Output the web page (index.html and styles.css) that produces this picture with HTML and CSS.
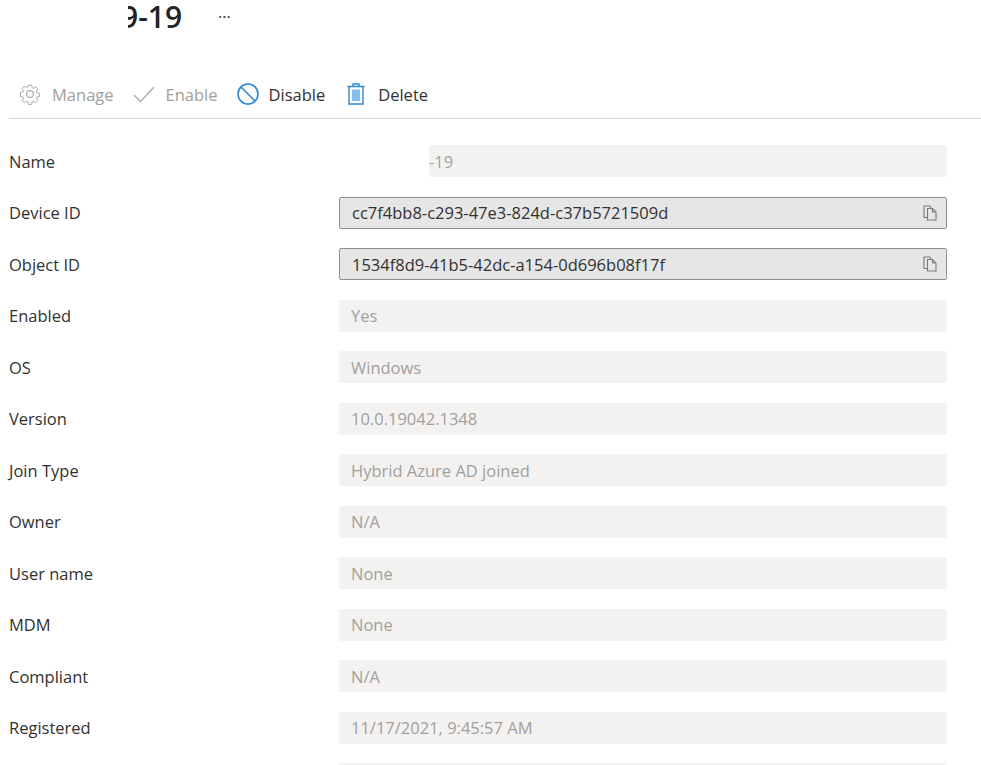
FILE: index.html
```html
<!DOCTYPE html>
<html lang="en">
<head>
    <meta charset="UTF-8">
    <title>Device details</title>
    <link rel="stylesheet" href="styles.css">
</head>
<body>
    <div class="title-bar">
        <h1 class="title"><span>9-19</span></h1>
        <span class="more">&middot;&middot;&middot;</span>
    </div>
    <div class="toolbar">
        <span class="tool off">
            <svg width="22" height="22" viewBox="0 0 22 22" fill="none" stroke="#a8a8a8" stroke-width="1.1">
                <circle cx="11" cy="11" r="3.4"/>
                <path d="M9.2 1.3h3.6l.5 2.7 1.7.7 2.3-1.6 2.5 2.5-1.6 2.3.7 1.7 2.7.5v3.6l-2.7.5-.7 1.7 1.6 2.3-2.5 2.5-2.3-1.6-1.7.7-.5 2.7H9.2l-.5-2.7-1.7-.7-2.3 1.6-2.5-2.5 1.6-2.3-.7-1.7-2.7-.5V9.2l2.7-.5.7-1.7-1.6-2.3 2.5-2.5 2.3 1.6 1.7-.7z" transform="translate(1.1 1.1) scale(.9)"/>
            </svg>
            Manage
        </span>
        <span class="tool off">
            <svg width="22" height="22" viewBox="0 0 22 22" fill="none" stroke="#a8a8a8" stroke-width="1.3">
                <path d="M1 12l6.5 6.5L21 4"/>
            </svg>
            Enable
        </span>
        <span class="tool">
            <svg width="22" height="22" viewBox="0 0 22 22" fill="none" stroke="#2b88d8" stroke-width="1.6">
                <circle cx="11" cy="11" r="10"/>
                <path d="M4 4l14 14"/>
            </svg>
            Disable
        </span>
        <span class="tool trash">
            <svg width="18" height="22" viewBox="0 0 18 22">
                <rect x="5" y="6.5" width="8" height="11.5" fill="#83bdee"/>
                <path d="M.5 3.5h17M6 3.2V1h6v2.2M2 3.5V21h14V3.5" fill="none" stroke="#2b88d8" stroke-width="1.4"/>
            </svg>
            Delete
        </span>
    </div>

    <div class="details">
        <div class="row">
            <label>Name</label>
            <div class="field redacted">-19</div>
        </div>
        <div class="row">
            <label>Device ID</label>
            <div class="field copy">cc7f4bb8-c293-47e3-824d-c37b5721509d
                <svg class="copy-icon" width="15" height="16" viewBox="0 0 15 16" fill="none" stroke="#7a7a7a" stroke-width="1.1">
                    <path d="M4.5 12.5H1V1h6l1 2"/>
                    <path d="M4.5 3.5h5L13 7v8H4.5z"/>
                    <path d="M9.5 3.5V7H13"/>
                </svg>
            </div>
        </div>
        <div class="row">
            <label>Object ID</label>
            <div class="field copy">1534f8d9-41b5-42dc-a154-0d696b08f17f
                <svg class="copy-icon" width="15" height="16" viewBox="0 0 15 16" fill="none" stroke="#7a7a7a" stroke-width="1.1">
                    <path d="M4.5 12.5H1V1h6l1 2"/>
                    <path d="M4.5 3.5h5L13 7v8H4.5z"/>
                    <path d="M9.5 3.5V7H13"/>
                </svg>
            </div>
        </div>
        <div class="row"><label>Enabled</label><div class="field">Yes</div></div>
        <div class="row"><label>OS</label><div class="field">Windows</div></div>
        <div class="row"><label>Version</label><div class="field">10.0.19042.1348</div></div>
        <div class="row"><label>Join Type</label><div class="field">Hybrid Azure AD joined</div></div>
        <div class="row"><label>Owner</label><div class="field">N/A</div></div>
        <div class="row"><label>User name</label><div class="field">None</div></div>
        <div class="row"><label>MDM</label><div class="field">None</div></div>
        <div class="row"><label>Compliant</label><div class="field">N/A</div></div>
        <div class="row"><label>Registered</label><div class="field">11/17/2021, 9:45:57 AM</div></div>
        <div class="row"><label></label><div class="field"></div></div>
    </div>
</body>
</html>
```

FILE: styles.css
```css
html, body {
    height: 765px;
    overflow: hidden;
}
body {
    margin: 0;
    background: #fff;
    color: #323130;
    font-family: "Open Sans", "Noto Sans", sans-serif;
    font-size: 16.5px;
}
.title-bar {
    display: flex;
    align-items: center;
    height: 34px;
    padding-left: 128px;
}
.title {
    margin: 0;
    font-size: 30px;
    font-weight: 600;
    line-height: 34px;
    color: #252423;
    width: 56px;
    overflow: hidden;
    white-space: nowrap;
}
.title span {
    display: block;
    margin-left: -7px;
}
.more {
    margin-left: 34px;
    font-size: 16px;
    line-height: 34px;
}
.toolbar {
    display: flex;
    align-items: center;
    height: 48px;
    margin: 36px 0 0 9px;
    padding-left: 10px;
    gap: 19px;
    border-bottom: 1px solid #d6d6d6;
}
.tool {
    display: flex;
    align-items: center;
    gap: 10px;
    white-space: nowrap;
}
.tool.off {
    gap: 11px;
    color: #a19f9d;
}
.tool.trash {
    gap: 13px;
    margin-left: 3px;
}
.details {
    display: flex;
    flex-direction: column;
    gap: 19.5px;
    margin-top: 26px;
    padding: 0 34px 0 9px;
}
.row {
    display: grid;
    grid-template-columns: 330px 1fr;
    align-items: center;
    height: 32px;
}
.field {
    display: flex;
    align-items: center;
    justify-content: space-between;
    box-sizing: border-box;
    height: 32px;
    padding: 0 12px;
    border-radius: 2px;
    background: #f3f2f1;
    color: #a19f9d;
}
.field.redacted {
    margin-left: 90px;
    padding-left: 0;
}
.field.copy {
    background: #e6e6e6;
    border: 1.5px solid #8f8f8f;
    color: #323130;
    padding: 0 8px 0 12px;
}
```
